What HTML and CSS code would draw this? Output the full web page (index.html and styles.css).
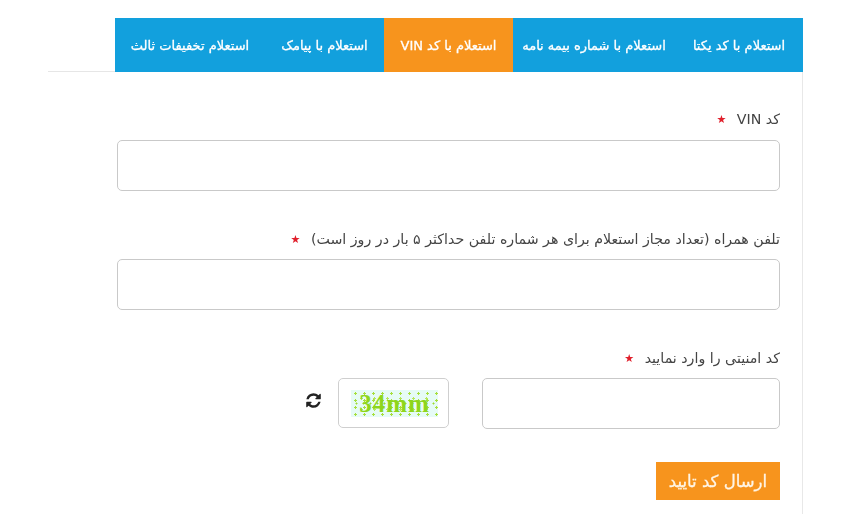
FILE: index.html
```html
<!DOCTYPE html>
<html lang="fa" dir="rtl">
<head>
  <meta charset="UTF-8">
  <title>استعلام با کد VIN</title>
  <link rel="stylesheet" href="styles.css">
</head>
<body>

<div class="page">
  <div class="tabs-row">
    <ul class="tabs">
      <li class="tab tab-1">استعلام با کد یکتا</li>
      <li class="tab tab-2">استعلام با شماره بیمه نامه</li>
      <li class="tab tab-3 active">استعلام با کد VIN</li>
      <li class="tab tab-4">استعلام با پیامک</li>
      <li class="tab tab-5">استعلام تخفیفات ثالث</li>
    </ul>
    <div class="tabs-line"></div>
  </div>

  <form class="panel">
    <div class="field">
      <label>کد VIN <span class="star">★</span></label>
      <input type="text">
    </div>

    <div class="field">
      <label>تلفن همراه (تعداد مجاز استعلام برای هر شماره تلفن حداکثر ۵ بار در روز است) <span class="star">★</span></label>
      <input type="text">
    </div>

    <div class="field">
      <label>کد امنیتی را وارد نمایید <span class="star">★</span></label>
      <div class="captcha-row">
        <input type="text" class="captcha-input">
        <div class="captcha-box">
          <div class="captcha" dir="ltr">34mm</div>
        </div>
        <svg class="refresh" viewBox="0 0 1792 1792" aria-hidden="true">
          <path d="M1639 1056q0 5-1 7-64 268-268 434.5t-478 166.5q-146 0-282.5-55t-243.5-157l-129 129q-19 19-45 19t-45-19-19-45v-448q0-26 19-45t45-19h448q26 0 45 19t19 45-19 45l-137 137q71 66 161 102t187 36q134 0 250-65t186-179q11-17 53-117 8-23 30-23h192q13 0 22.5 9.5t9.5 22.5zm25-800v448q0 26-19 45t-45 19h-448q-26 0-45-19t-19-45 19-45l138-138q-148-137-349-137-134 0-250 65t-186 179q-11 17-53 117-8 23-30 23h-199q-13 0-22.5-9.5t-9.5-22.5v-7q65-268 270-434.5t480-166.5q146 0 284 55.5t245 156.5l130-129q19-19 45-19t45 19 19 45z"/>
        </svg>
      </div>
    </div>

    <button type="button" class="submit-btn">ارسال کد تایید</button>
  </form>
</div>

</body>
</html>
```

FILE: styles.css
```css
body {
  margin: 0;
  background: #fff;
  color: #444;
  font-family: 'DejaVu Sans', 'Noto Sans', sans-serif;
  overflow: hidden;
}

.page {
  width: 755px;
  margin-right: 50px;
  padding-top: 18px;
  filter: blur(0.45px);
}

.tabs-row {
  display: flex;
  align-items: flex-end;
}

.tabs {
  display: flex;
  flex: none;
  margin: 0;
  padding: 0;
  list-style: none;
  width: 688px;
  height: 54px;
  background: #12a0dd;
}

.tabs-line {
  flex: 1;
  height: 1px;
  background: #e6e6e6;
}

.tab {
  display: flex;
  align-items: center;
  justify-content: center;
  color: #fff;
  font-size: 13px;
  -webkit-text-stroke: 0.3px #fff;
  white-space: nowrap;
}

.tab-1 { width: 128px; }
.tab-2 { width: 162px; }
.tab-3 { width: 129px; }
.tab-4 { width: 119px; }
.tab-5 { width: 150px; }

.tab.active {
  background: #f7941d;
}

.panel {
  box-sizing: border-box;
  width: 688px;
  height: 442px;
  padding: 35px 0 0 0;
  border-right: 1px solid #e8e8e8;
}

.field {
  margin: 0 22px 36px 0;
}

.field label {
  display: block;
  height: 24px;
  line-height: 24px;
  margin-bottom: 9px;
  font-size: 14.2px;
}

.field + .field label {
  margin-bottom: 8px;
}

.star {
  position: relative;
  top: -1px;
  color: #e0202c;
  font-size: 11px;
  margin-right: 6px;
}

input {
  display: block;
  box-sizing: border-box;
  width: 663px;
  height: 51px;
  background: #fff;
  border: 1px solid #c9c9c9;
  border-radius: 5px;
}

.captcha-row {
  display: flex;
  align-items: flex-start;
  gap: 33px;
}

input.captcha-input {
  width: 298px;
}

.captcha-box {
  box-sizing: border-box;
  width: 111px;
  height: 50px;
  padding: 11px 10px 10px 12px;
  border: 1px solid #cfcfcf;
  border-radius: 5px;
}

.captcha {
  height: 27px;
  line-height: 27px;
  text-align: center;
  color: #8ed61c;
  font-family: 'Liberation Serif', serif;
  font-size: 25px;
  font-weight: bold;
  letter-spacing: 1px;
  background-color: #e6fbf6;
  background-image:
    radial-gradient(circle, #a6df3c 1px, transparent 1.4px),
    radial-gradient(circle, #b6e85a 1px, transparent 1.4px),
    radial-gradient(circle, #9adb2c 0.8px, transparent 1.2px);
  background-size: 9px 7px, 13px 11px, 7px 17px;
  background-position: 0 0, 4px 3px, 2px 5px;
}

.refresh {
  width: 17px;
  height: 17px;
  margin: 14px -17px 0 0;
  fill: #222;
}

.submit-btn {
  display: block;
  box-sizing: border-box;
  width: 124px;
  height: 38px;
  margin: -3px 22px 0 0;
  padding: 0;
  border: none;
  background: #f7941d;
  color: #fff5e6;
  font-family: inherit;
  font-size: 16.5px;
  -webkit-text-stroke: 0.3px #fff5e6;
}
```
